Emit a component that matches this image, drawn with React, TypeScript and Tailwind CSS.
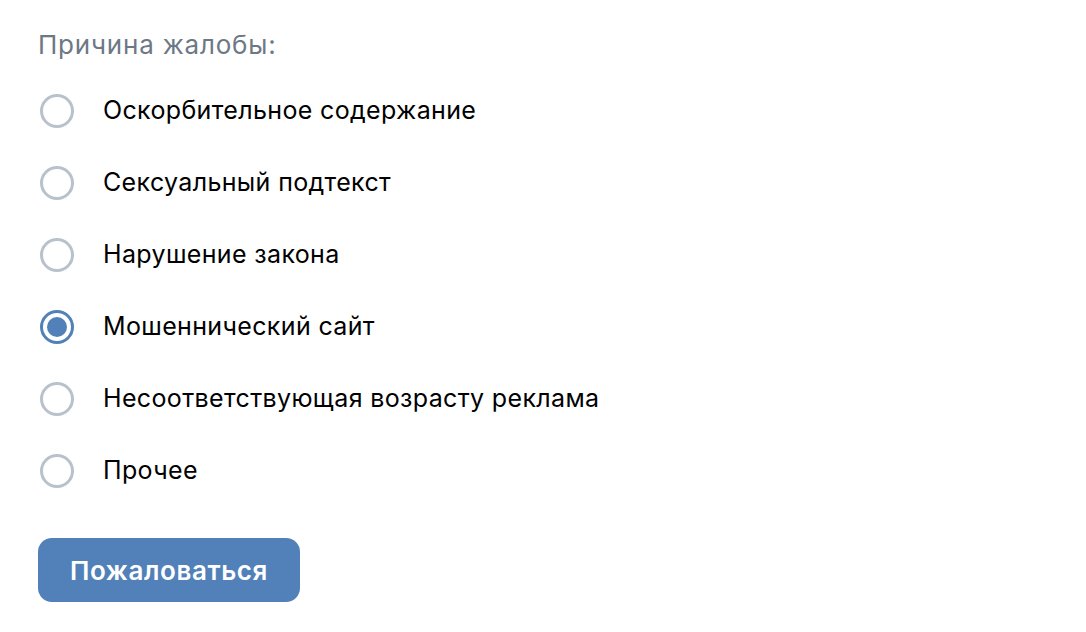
import React, { useState } from "react";

const options = [
  "Оскорбительное содержание",
  "Сексуальный подтекст",
  "Нарушение закона",
  "Мошеннический сайт",
  "Несоответствующая возрасту реклама",
  "Прочее",
];

export default function App() {
  const [selected, setSelected] = useState(3);
  return (
    <div
      className="w-[1086px] h-[632px] bg-white pl-[38px] pt-[27px]"
      style={{ fontFamily: "Inter, 'Noto Sans', sans-serif" }}
    >
      <div className="text-[26px] leading-[36px] tracking-[0.8px] text-[#6d7885]">Причина жалобы:</div>
      <div className="mt-[12px] flex flex-col">
        {options.map((o, i) => (
          <label
            key={o}
            className="flex items-center h-[72px] cursor-pointer"
            onClick={() => setSelected(i)}
          >
            <span
              className={
                i === selected
                  ? "ml-[2px] w-[34px] h-[34px] rounded-full border-[3px] border-[#5181b8] flex items-center justify-center"
                  : "ml-[2px] w-[34px] h-[34px] rounded-full border-[3px] border-[#b8c1cc]"
              }
            >
              {i === selected && <span className="w-[20px] h-[20px] rounded-full bg-[#5181b8]" />}
            </span>
            <span className="ml-[29px] text-[25px] tracking-[0.35px] text-black">{o}</span>
          </label>
        ))}
      </div>
      <button className="mt-[31px] w-[262px] h-[64px] rounded-[14px] bg-[#5181b8] text-white text-[26px] tracking-[0.6px] font-semibold">
        Пожаловаться
      </button>
    </div>
  );
}
